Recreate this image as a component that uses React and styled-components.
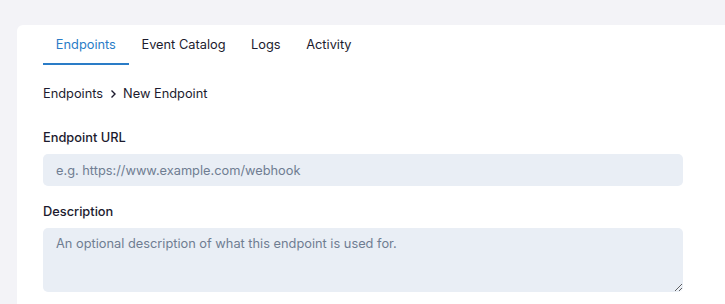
import React from 'react';
import styled, { createGlobalStyle } from 'styled-components';

const GlobalStyle = createGlobalStyle`
    body {
        margin: 0;
        background: #f3f3f7;
        font-family: Inter, "Noto Sans", sans-serif;
        color: #1c1b2e;
    }
`;

const Page = styled.div`
    padding: 25px 0 0 17px;
    height: 304px;
    box-sizing: border-box;
    overflow: hidden;
`;

const Card = styled.div`
    background: white;
    border-radius: 6px 0 0 0;
    padding: 0 42px 20px 26px;
    min-height: 300px;
`;

const Tabs = styled.div`
    display: flex;
    flex-direction: row;
`;

const Tab = styled.div`
    font-size: 12.8px;
    padding: 12px 12.8px 10px;
    line-height: 16px;
    color: ${props => (props.active ? '#2a7cc7' : '#1c1b2e')};
    border-bottom: 2px solid ${props => (props.active ? '#2a7cc7' : 'transparent')};
`;

const Crumbs = styled.div`
    display: flex;
    align-items: center;
    gap: 6px;
    font-size: 12.8px;
    margin-top: 21px;
    line-height: 16px;
`;

const Field = styled.div`
    display: flex;
    flex-direction: column;
    margin-top: ${props => props.top}px;
`;

const Label = styled.label`
    font-size: 12.8px;
    font-weight: 500;
    line-height: 16px;
    margin-bottom: 8px;
`;

const Input = styled.input`
    height: 32px;
    box-sizing: border-box;
    border: none;
    border-radius: 5px;
    background: #e9eef5;
    padding: 0 13px;
    font-family: Inter, sans-serif;
    font-size: 12.8px;
    outline: none;
    &::placeholder {
        color: #6f7d92;
    }
`;

const TextArea = styled.textarea`
    height: 64px;
    box-sizing: border-box;
    border: none;
    border-radius: 5px;
    background: #e9eef5;
    padding: 8px 13px;
    font-family: Inter, sans-serif;
    font-size: 12.8px;
    outline: none;
    &::placeholder {
        color: #6f7d92;
    }
`;

function App() {
    return (
        <Page>
            <GlobalStyle />
            <Card>
                <Tabs>
                    <Tab active>Endpoints</Tab>
                    <Tab>Event Catalog</Tab>
                    <Tab>Logs</Tab>
                    <Tab>Activity</Tab>
                </Tabs>
                <Crumbs>
                    <span>Endpoints</span>
                    <svg width="8" height="10" viewBox="0 0 8 10">
                        <path d="M2.5 1.5 L6 5 L2.5 8.5" fill="none" stroke="#1c1b2e" strokeWidth="1.4" />
                    </svg>
                    <span>New Endpoint</span>
                </Crumbs>
                <Field top={28}>
                    <Label>Endpoint URL</Label>
                    <Input placeholder="e.g. https://www.example.com/webhook" />
                </Field>
                <Field top={18}>
                    <Label>Description</Label>
                    <TextArea placeholder="An optional description of what this endpoint is used for." />
                </Field>
            </Card>
        </Page>
    );
}

export default App;
